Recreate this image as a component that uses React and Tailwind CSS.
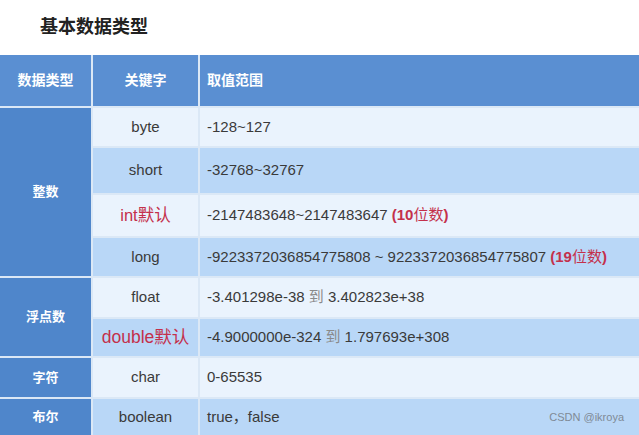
const LIGHT = "bg-[#eaf3fd]";
const DARK = "bg-[#b9d7f7]";

const rows = [
  { key: "byte", range: "-128~127", bg: LIGHT, h: "h-[38px]" },
  { key: "short", range: "-32768~32767", bg: DARK, h: "h-[45px]" },
  {
    key: <span className="text-[#c4304b] text-[16.5px]">int默认</span>,
    range: (
      <>
        -2147483648~2147483647{" "}
        <span className="text-[#c4304b] font-bold">(10<span className="font-normal">位数</span>)</span>
      </>
    ),
    bg: LIGHT,
    h: "h-[41px]",
  },
  {
    key: "long",
    range: (
      <>
        -9223372036854775808 ~ 9223372036854775807{" "}
        <span className="text-[#c4304b] font-bold">(19<span className="font-normal">位数</span>)</span>
      </>
    ),
    bg: DARK,
    h: "h-[38px]",
  },
  {
    key: "float",
    range: (
      <>
        -3.401298e-38 <span className="text-[#8a8a8a]">到</span> 3.402823e+38
      </>
    ),
    bg: LIGHT,
    h: "h-[39px]",
  },
  {
    key: <span className="text-[#c4304b] text-[17.5px]">double默认</span>,
    range: (
      <>
        -4.9000000e-324 <span className="text-[#8a8a8a]">到</span> 1.797693e+308
      </>
    ),
    bg: DARK,
    h: "h-[37px]",
  },
  { key: "char", range: "0-65535", bg: LIGHT, h: "h-[39px]" },
  { key: "boolean", range: "true，false", bg: DARK, h: "h-[36px]" },
];

function GroupCell({ label, span }) {
  return (
    <div
      className={`${span} flex items-center justify-center bg-[#4f86cb] text-white text-[13px] font-bold`}
    >
      {label}
    </div>
  );
}

export default function App() {
  return (
    <div
      className="relative w-[639px] h-[435px] overflow-hidden bg-white"
      style={{ fontFamily: '"Liberation Sans", "Noto Sans CJK SC", sans-serif' }}
    >
      <h1 className="pl-[40px] pt-[14px] h-[55px] text-[18px] font-bold text-[#222]">
        基本数据类型
      </h1>

      <div className="grid grid-cols-[91px_105px_1fr] gap-[2px] bg-[#dbe8f6]">
        {/* header */}
        <div className="h-[51px] flex items-center justify-center bg-[#5a8fd2] text-white text-[14px] font-bold">
          数据类型
        </div>
        <div className="h-[51px] flex items-center justify-center bg-[#5a8fd2] text-white text-[14px] font-bold">
          关键字
        </div>
        <div className="h-[51px] flex items-center pl-[7px] bg-[#5a8fd2] text-white text-[14px] font-bold">
          取值范围
        </div>

        <GroupCell label="整数" span="row-span-4" />
        {rows.slice(0, 4).map((r, i) => (
          <Row key={i} r={r} />
        ))}
        <GroupCell label="浮点数" span="row-span-2" />
        {rows.slice(4, 6).map((r, i) => (
          <Row key={i} r={r} />
        ))}
        <GroupCell label="字符" span="" />
        <Row r={rows[6]} />
        <GroupCell label="布尔" span="" />
        <Row r={rows[7]} />
      </div>

      <div className="absolute right-[15px] bottom-[10px] text-[11px] text-[#7f8a96]">
        CSDN @ikroya
      </div>
    </div>
  );
}

function Row({ r }) {
  return (
    <>
      <div
        className={`${r.bg} ${r.h} flex items-center justify-center text-[15px] text-[#3a3a3a]`}
      >
        {r.key}
      </div>
      <div
        className={`${r.bg} ${r.h} flex items-center pl-[7px] text-[15px] text-[#3a3a3a] whitespace-nowrap`}
      >
        <span>{r.range}</span>
      </div>
    </>
  );
}
